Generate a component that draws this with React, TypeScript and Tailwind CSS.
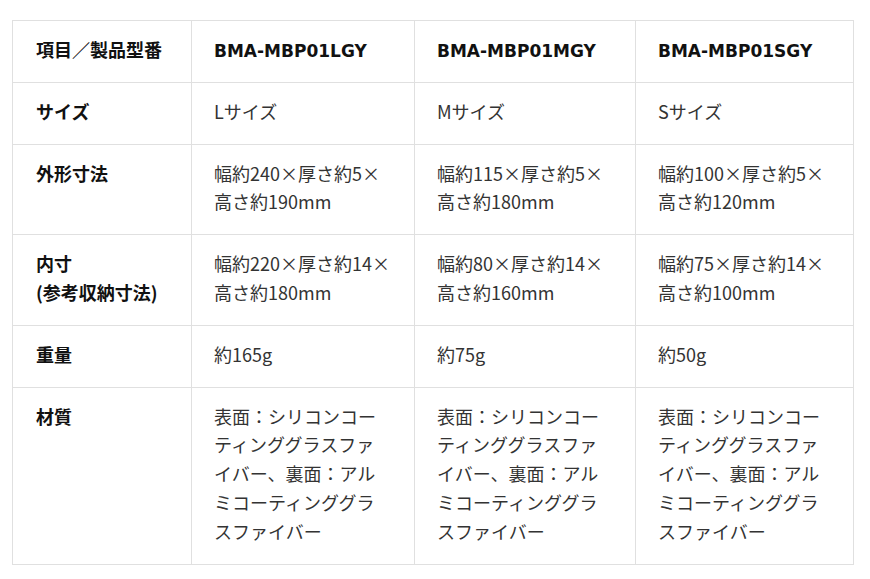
import React from "react";

const rows: { label: React.ReactNode; cells: string[]; header?: boolean }[] = [
  { label: "項目／製品型番", cells: ["BMA-MBP01LGY", "BMA-MBP01MGY", "BMA-MBP01SGY"], header: true },
  { label: "サイズ", cells: ["Lサイズ", "Mサイズ", "Sサイズ"] },
  {
    label: "外形寸法",
    cells: ["幅約240×厚さ約5×高さ約190mm", "幅約115×厚さ約5×高さ約180mm", "幅約100×厚さ約5×高さ約120mm"],
  },
  {
    label: (
      <>
        内寸
        <br />
        (参考収納寸法)
      </>
    ),
    cells: ["幅約220×厚さ約14×高さ約180mm", "幅約80×厚さ約14×高さ約160mm", "幅約75×厚さ約14×高さ約100mm"],
  },
  { label: "重量", cells: ["約165g", "約75g", "約50g"] },
  {
    label: "材質",
    cells: [
      "表面：シリコンコーティンググラスファイバー、裏面：アルミコーティンググラスファイバー",
      "表面：シリコンコーティンググラスファイバー、裏面：アルミコーティンググラスファイバー",
      "表面：シリコンコーティンググラスファイバー、裏面：アルミコーティンググラスファイバー",
    ],
  },
];

export default function App() {
  return (
    <div
      className="w-[870px] h-[579px] bg-white pt-[20px] pl-[12px]"
      style={{ fontFamily: '"Noto Sans CJK JP", "Noto Sans", sans-serif' }}
    >
      <table className="table-fixed border-collapse w-[841px] text-[18px] leading-[1.6]">
        <colgroup>
          <col className="w-[179px]" />
          <col className="w-[223px]" />
          <col className="w-[221px]" />
          <col className="w-[218px]" />
        </colgroup>
        <tbody>
          {rows.map((r, i) => (
            <tr key={i}>
              <th className="border border-[#e0e0e0] align-top text-left font-bold text-[#111] px-[23px] pt-[14px] pb-[18px]">
                {r.label}
              </th>
              {r.cells.map((c, j) =>
                r.header ? (
                  <td
                    key={j}
                    className="border border-[#e0e0e0] align-top font-bold text-[#111] px-[22px] pt-[16px] pb-[16px] font-['DejaVu_Sans','Noto_Sans_CJK_JP',sans-serif] text-[17px] leading-[28.8px]"
                  >
                    {c}
                  </td>
                ) : (
                  <td
                    key={j}
                    className="border border-[#e0e0e0] align-top text-[#333] px-[22px] pt-[14px] pb-[18px] break-all"
                  >
                    {c}
                  </td>
                )
              )}
            </tr>
          ))}
        </tbody>
      </table>
    </div>
  );
}
